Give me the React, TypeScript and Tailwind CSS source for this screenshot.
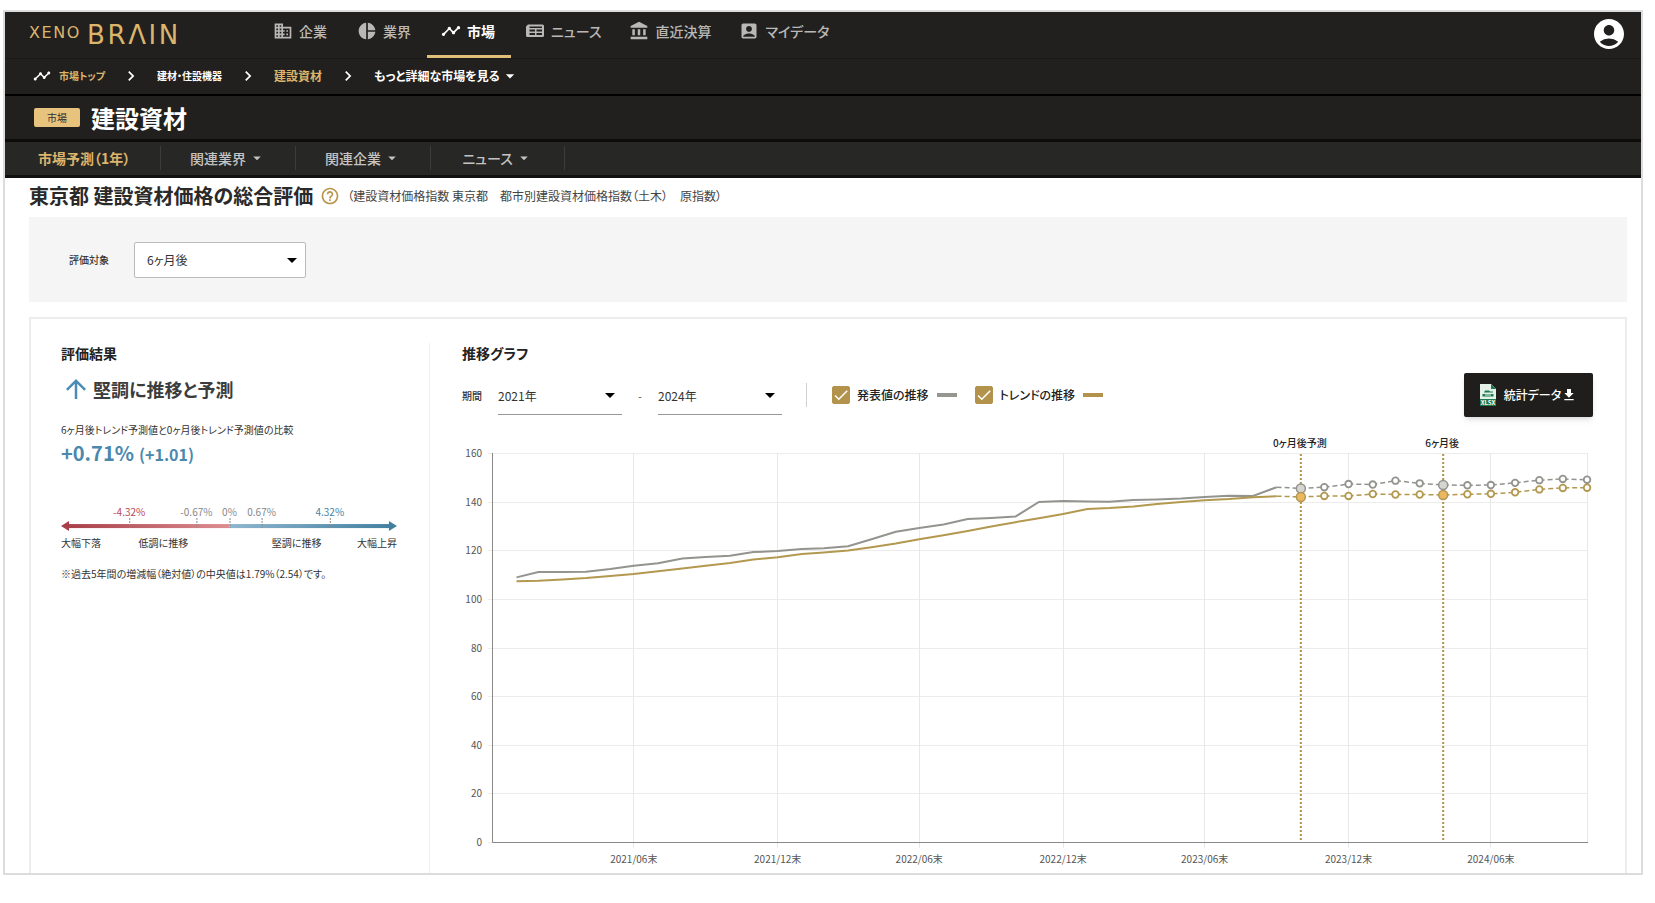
import { useState } from "react";
import type { ReactNode } from "react";
import {
  MdAccountBalance,
  MdAccountBox,
  MdAccountCircle,
  MdArrowDropDown,
  MdArrowUpward,
  MdBusiness,
  MdCheck,
  MdChevronRight,
  MdDownload,
  MdHelpOutline,
  MdPieChart,
  MdTimeline,
} from "react-icons/md";
import { clsx } from "clsx";

const NAV: { label: string; icon: ReactNode; active?: boolean }[] = [
  { label: "企業", icon: <MdBusiness className="w-5 h-5" /> },
  { label: "業界", icon: <MdPieChart className="w-5 h-5" /> },
  { label: "市場", icon: <MdTimeline className="w-5 h-5" />, active: true },
  { label: "ニュース", icon: <NewsIcon /> },
  { label: "直近決算", icon: <MdAccountBalance className="w-5 h-5" /> },
  { label: "マイデータ", icon: <MdAccountBox className="w-5 h-5" /> },
];

const TABS = ["関連業界", "関連企業", "ニュース"];

// 2021年1月末〜2024年10月末の月次データ
const PUBLISHED = [
  108.9, 111.1, 111.1, 111.2, 112.3, 113.7, 114.7, 116.7, 117.3, 117.8, 119.3, 119.7,
  120.6, 120.9, 121.7, 124.6, 127.7, 129.2, 130.7, 132.9, 133.3, 133.9, 139.9, 140.3,
  140.1, 140, 140.7, 140.9, 141.3, 142, 142.5, 142.4, 146, 145.5, 146, 147.3,
  147.1, 148.7, 147.6, 146.9, 146.8, 146.9, 147.8, 148.9, 149.4, 149.1,
];

const TREND = [
  107.3, 107.5, 108, 108.6, 109.5, 110.3, 111.4, 112.5, 113.7, 114.8, 116.2, 117.2,
  118.5, 119.1, 119.9, 121.3, 122.8, 124.6, 126.2, 128, 129.8, 131.6, 133.2, 135,
  137, 137.4, 138.1, 139.1, 139.9, 140.6, 141.1, 141.9, 142.3, 142, 142.4, 142.4,
  143.2, 143, 143, 142.8, 143.1, 143.3, 143.9, 145.1, 145.7, 145.8,
];

// 最後の実績値のインデックス(2023年9月末)
const LAST_ACTUAL = 32;

const MARKS = [
  { index: 33, label: "0ヶ月後予測" },
  { index: 39, label: "6ヶ月後" },
];

export default function App() {
  return (
    <div className="min-h-screen bg-white pt-2.5 pl-[3px] pr-3 pb-7 font-['Noto_Sans_CJK_JP',sans-serif] [font-feature-settings:'palt'] text-[#333]">
      <div className="border-2 border-[#dcdcdc]">
        <Header />
        <main className="pl-6 pr-3.5">
          <div className="flex items-center h-9">
            <h1 className="text-xl font-bold text-[#2a2a2a] leading-8">東京都 建設資材価格の総合評価</h1>
            <button type="button" aria-label="ヘルプ" className="ml-[7px] text-[#b8954a]">
              <MdHelpOutline className="w-5 h-5" />
            </button>
            <p className="ml-[7px] text-xs text-[#444]">
              （建設資材価格指数 東京都　都市別建設資材価格指数（土木）　原指数）
            </p>
          </div>

          <div className="flex items-center mt-[3px] h-[85px] pl-10 gap-[25px] bg-[#f5f5f5]">
            <label htmlFor="target" className="text-[10px] font-medium">評価対象</label>
            <div className="relative w-[172px]">
              <select
                id="target"
                className="appearance-none w-full h-9 px-3 text-xs bg-white border border-[#bbb] rounded-xs"
              >
                <option>6ヶ月後</option>
              </select>
              <MdArrowDropDown className="absolute right-0.5 top-1.5 w-6 h-6 text-black pointer-events-none" />
            </div>
          </div>

          <div className="flex mt-[15px] pt-6 px-[30px] border-2 border-b-0 border-[#ececec]">
            <Result />
            <ChartPanel />
          </div>
        </main>
      </div>
    </div>
  );
}

function Header() {
  return (
    <header className="bg-[#21201e] text-white">
      <div className="flex items-center h-[47px] border-b border-[#1a1918] pl-6 pr-3.5">
        <a href="#" className="flex items-start w-[216px] text-[#dcb56c] font-['DejaVu_Sans',sans-serif]">
          <span className="text-base leading-5 tracking-widest">XENO</span>
          <span className="ml-1.5 text-[26px] leading-6 tracking-widest">BRΛIN</span>
        </a>
        <nav className="flex self-stretch ml-3.5">
          {NAV.map((n) => (
            <a
              key={n.label}
              href="#"
              className={clsx(
                "flex items-center gap-1.5 px-3.5 pb-1.5 min-w-21 text-sm border-b-3",
                n.active ? "border-[#e0bd7b] font-bold text-white" : "border-transparent font-medium text-[#b9b8b6]"
              )}
            >
              {n.icon}
              {n.label}
            </a>
          ))}
        </nav>
        <button type="button" aria-label="アカウント" className="ml-auto pb-0.5">
          <MdAccountCircle className="w-9 h-9" />
        </button>
      </div>

      <nav className="flex items-center h-[37px] pl-7 pb-0.5 border-b-2 border-black font-bold">
        <MdTimeline className="w-[18px] h-[18px]" />
        <a href="#" className="ml-2 text-[10px] text-[#dcb56c]">市場トップ</a>
        <MdChevronRight className="mx-4 w-5 h-5" />
        <a href="#" className="text-[10px]">建材・住設機器</a>
        <MdChevronRight className="mx-4 w-5 h-5" />
        <a href="#" className="text-xs text-[#dcb56c]">建設資材</a>
        <MdChevronRight className="mx-4 w-5 h-5" />
        <button type="button" className="flex items-center text-xs font-bold">
          もっと詳細な市場を見る
          <MdArrowDropDown className="w-5 h-5" />
        </button>
      </nav>

      <div className="flex items-center h-[46px] pl-[29px] gap-[11px] border-b-3 border-[#0d0c0b]">
        <span className="w-[46px] text-center text-[10px] leading-[19px] bg-[#e8c37e] text-[#333] rounded-xs">市場</span>
        <h2 className="text-2xl font-bold">建設資材</h2>
      </div>

      <nav className="flex items-center h-9 pb-0.5 bg-[#272726] border-b-3 border-[#121110] text-sm font-medium text-[#c4c3c1]">
        <a href="#" className="w-[155px] pl-[33px] font-bold text-[#dcb56c]">市場予測（1年）</a>
        {TABS.map((t) => (
          <button
            key={t}
            type="button"
            className="flex items-center justify-center gap-0.5 w-[135px] h-6 border-l border-[#3c3c3a] last:border-r"
          >
            {t}
            <MdArrowDropDown className="w-[18px] h-[18px]" />
          </button>
        ))}
      </nav>
    </header>
  );
}

function Result() {
  return (
    <section className="w-[369px] pr-8 border-r border-[#f0f0f0]">
      <h3 className="text-sm leading-5 font-bold text-[#222]">評価結果</h3>
      <p className="flex items-center mt-3 gap-0.5 text-lg leading-7 font-bold text-[#3c3c3c]">
        <MdArrowUpward className="w-[30px] h-[30px] -my-px text-[#4a8cb3]" />
        堅調に推移と予測
      </p>
      <p className="mt-[19px] text-[10px] leading-4">6ヶ月後トレンド予測値と0ヶ月後トレンド予測値の比較</p>
      <p className="flex items-baseline gap-[5px] mt-px leading-7 font-bold text-[#4a88ad]">
        <span className="text-xl leading-7">+0.71%</span>
        <span className="text-base">(+1.01)</span>
      </p>
      <Scale />
      <p className="mt-4 text-[10px] leading-4">※過去5年間の増減幅（絶対値）の中央値は1.79%（2.54）です。</p>
    </section>
  );
}

function Scale() {
  const ticks = [
    { x: 68, label: "-4.32%", fill: "#b8485a" },
    { x: 135, label: "-0.67%", fill: "#888" },
    { x: 168, label: "0%", fill: "#888" },
    { x: 200, label: "0.67%", fill: "#888" },
    { x: 268, label: "4.32%", fill: "#4583a8" },
  ];
  return (
    <svg viewBox="0 0 335 50" className="block mt-[33px] w-full" fontSize="10">
      <defs>
        <linearGradient id="down">
          <stop offset="0" stopColor="#a83e48" />
          <stop offset="1" stopColor="#dd8e92" />
        </linearGradient>
        <linearGradient id="up">
          <stop offset="0" stopColor="#8fb6cf" />
          <stop offset="1" stopColor="#427f9f" />
        </linearGradient>
      </defs>
      <rect x="5" y="24" width="163" height="4" fill="url(#down)" />
      <rect x="168" y="24" width="162" height="4" fill="url(#up)" />
      {ticks.map((t) => (
        <g key={t.x}>
          <text x={t.x} y="16" textAnchor="middle" fill={t.fill}>{t.label}</text>
          <path d={`M${t.x + 0.5} 18v10`} stroke="#8a8a8a" strokeDasharray="2 1" />
        </g>
      ))}
      <path d="M0 26l8-5v10z" fill="#a83e48" />
      <path d="M335 26l-8-5v10z" fill="#427f9f" />
      <g fill="#333">
        <text x="0" y="47">大幅下落</text>
        <text x="102" y="47" textAnchor="middle">低調に推移</text>
        <text x="235" y="47" textAnchor="middle">堅調に推移</text>
        <text x="335" y="47" textAnchor="end">大幅上昇</text>
      </g>
    </svg>
  );
}

function ChartPanel() {
  const [showPublished, setShowPublished] = useState(true);
  const [showTrend, setShowTrend] = useState(true);

  return (
    <section className="flex-1 min-w-0 pl-8">
      <h3 className="text-sm leading-5 font-bold text-[#222]">推移グラフ</h3>
      <div className="flex items-center mt-2 h-12">
        <span className="w-9 text-[10px] font-medium">期間</span>
        <YearSelect label="開始年" value="2021年" />
        <span className="w-9 text-center text-[10px]">-</span>
        <YearSelect label="終了年" value="2024年" />
        <div className="ml-6 mr-[25px] h-6 border-l border-[#d0d0d0]" />
        <Toggle label="発表値の推移" checked={showPublished} onChange={setShowPublished} swatch="bg-[#969690]" />
        <Toggle label="トレンドの推移" checked={showTrend} onChange={setShowTrend} swatch="bg-[#b3934c]" />
        <button
          type="button"
          className="flex items-center justify-center ml-auto mr-0.5 w-[129px] h-11 bg-[#1f1e1c] text-white text-xs font-medium rounded-xs shadow-md"
        >
          <XlsxIcon />
          <span className="ml-2">統計データ</span>
          <MdDownload className="w-4 h-4" />
        </button>
      </div>
      <Chart showPublished={showPublished} showTrend={showTrend} />
    </section>
  );
}

function YearSelect({ label, value }: { label: string; value: string }) {
  return (
    <div className="relative w-[124px]">
      <select
        aria-label={label}
        defaultValue={value}
        className="appearance-none w-full h-10 pt-0.5 text-xs bg-white border-b border-[#999]"
      >
        <option>2021年</option>
        <option>2022年</option>
        <option>2023年</option>
        <option>2024年</option>
      </select>
      <MdArrowDropDown className="absolute right-0 top-2 w-6 h-6 text-black pointer-events-none" />
    </div>
  );
}

interface ToggleProps {
  label: string;
  checked: boolean;
  onChange: (v: boolean) => void;
  swatch: string;
}

function Toggle({ label, checked, onChange, swatch }: ToggleProps) {
  return (
    <label className="flex items-center mr-[18px] text-xs font-medium text-[#222]">
      <span className="relative mr-[7px] w-[18px] h-[18px]">
        <input
          type="checkbox"
          checked={checked}
          onChange={(e) => onChange(e.target.checked)}
          className="block appearance-none w-full h-full rounded-xs border border-[#b3934c] checked:bg-[#b3934c]"
        />
        {checked && <MdCheck className="absolute inset-0 w-[18px] h-[18px] text-white pointer-events-none" />}
      </span>
      {label}
      <span className={clsx("ml-2 w-5 h-1", swatch)} />
    </label>
  );
}

const DAY_MS = 86400000;
const START = Date.UTC(2021, 0, 31);

// index = 2021年1月からの月数。各月末の日付で配置する
function px(index: number) {
  const days = (Date.UTC(2021, index + 1, 0) - START) / DAY_MS;
  return 54.5 + days * 0.782;
}

function py(value: number) {
  return 412 - value * 2.43;
}

function points(data: number[], from: number, to: number) {
  return data
    .slice(from, to + 1)
    .map((v, i) => `${px(from + i).toFixed(1)},${py(v).toFixed(1)}`)
    .join(" ");
}

function Chart({ showPublished, showTrend }: { showPublished: boolean; showTrend: boolean }) {
  const right = px(PUBLISHED.length - 1);
  return (
    <svg viewBox="0 0 1133 443" className="block mt-[11px] w-full" fontSize="10" fill="none">
      {[0, 20, 40, 60, 80, 100, 120, 140, 160].map((v) => (
        <g key={v}>
          <path d={`M26 ${Math.round(py(v)) + 0.5}H${right}`} stroke="#ececec" />
          <text x="20" y={py(v) + 4} textAnchor="end" fill="#555">{v}</text>
        </g>
      ))}
      {[5, 11, 17, 23, 29, 35, 41].map((m) => (
        <g key={m}>
          <path d={`M${Math.floor(px(m)) + 0.5} 23V418`} stroke="#e8e8e8" />
          <text x={px(m)} y="433" textAnchor="middle" fill="#555">
            {2021 + Math.floor(m / 12)}/{m % 12 === 5 ? "06" : "12"}末
          </text>
        </g>
      ))}
      <path d={`M${Math.floor(right) + 0.5} 23V412`} stroke="#e8e8e8" />
      <path d={`M30.5 23V412.5H${right + 1}`} stroke="#888" />

      {MARKS.map((m) => (
        <g key={m.index}>
          <path d={`M${px(m.index)} 24V412`} stroke="#b3934c" strokeWidth="2" strokeDasharray="2 2" />
          <text x={px(m.index) - 1} y="17" textAnchor="middle" fill="#222" fontWeight="500">{m.label}</text>
        </g>
      ))}

      {showPublished && <Series data={PUBLISHED} stroke="#93938f" markFill="#d6d5d2" />}
      {showTrend && <Series data={TREND} stroke="#b3984f" markFill="#ecb761" />}
    </svg>
  );
}

function Series({ data, stroke, markFill }: { data: number[]; stroke: string; markFill: string }) {
  return (
    <g stroke={stroke} strokeWidth="2">
      <polyline points={points(data, 0, LAST_ACTUAL)} />
      <polyline points={points(data, LAST_ACTUAL, data.length - 1)} strokeWidth="1.5" strokeDasharray="5 3" />
      {data.map((v, i) => {
        if (i <= LAST_ACTUAL) return null;
        const marked = MARKS.some((m) => m.index === i);
        return (
          <circle
            key={i}
            cx={px(i)}
            cy={py(v)}
            r={marked ? 4.5 : 3.3}
            fill={marked ? markFill : "#fff"}
            strokeWidth={marked ? 1.5 : 1.8}
          />
        );
      })}
    </g>
  );
}

function NewsIcon() {
  return (
    <svg viewBox="0 0 20 20" className="w-5 h-5" fill="currentColor">
      <path
        fillRule="evenodd"
        d="M3 3.500h14.500a1.500 1.500 0 0 1 1.500 1.500v9.500a1.500 1.500 0 0 1-1.500 1.500H2.500a1.500 1.500 0 0 1-1.500-1.500V5.500zM4.500 5.500v1.500h12.500V5.500zM4.500 8.500v2h5.500v-2zM11.500 8.500v2h5.500v-2zM4.500 12v2h5.500v-2zM11.500 12v2h5.500v-2z"
      />
    </svg>
  );
}

function XlsxIcon() {
  return (
    <svg viewBox="0 0 16 24" className="w-4 h-6">
      <path d="M0 1h11l5 5v17H0z" fill="#e3f1e8" />
      <path d="M11 1l5 5h-5zM0 16h16v7H0z" fill="#1d7a4a" />
      <path d="M4 9.500l1-2h4l1 1h3v1zM2.500 11h11v2.500h-11z" fill="#1d7a4a" />
      <path d="M5 12h6" stroke="#e3f1e8" />
      <text x="8" y="22" textAnchor="middle" fontSize="6" fontWeight="700" fill="#fff">XLSX</text>
    </svg>
  );
}
